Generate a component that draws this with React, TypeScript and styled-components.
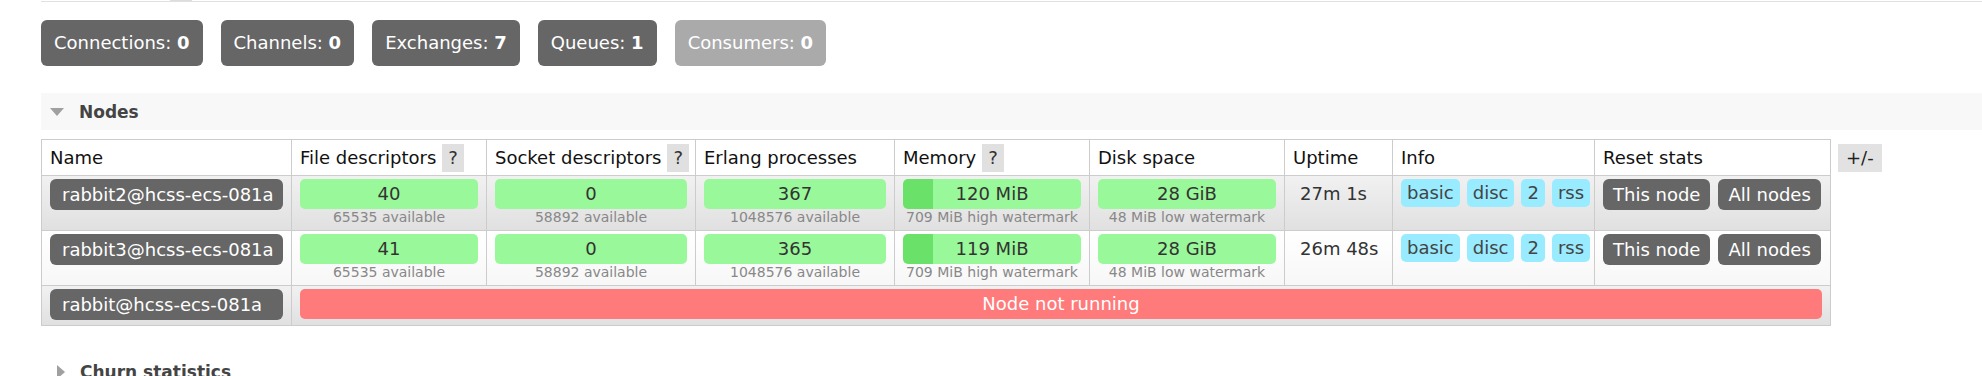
import React from 'react'
import styled, { createGlobalStyle } from 'styled-components'

const GlobalStyle = createGlobalStyle`
  body {
    margin: 0;
    background: #fff;
    font-family: "DejaVu Sans", Verdana, sans-serif;
    color: #333;
  }
`

const Page = styled.div`
  padding-left: 41px;
`

const TopBar = styled.div`
  display: flex;
  height: 1px;
  border-bottom: 1px solid #e0e0e0;
`

const TabStub = styled.div`
  margin-left: 129px;
  width: 22px;
  background: #ddd;
`

const Counters = styled.ul`
  display: flex;
  gap: 18px;
  margin: 18px 0 0;
  padding: 0;
  list-style: none;
`

const Counter = styled.li<{ $muted?: boolean }>`
  height: 46px;
  line-height: 46px;
  padding: 0 13px;
  border-radius: 6px;
  background: ${p => (p.$muted ? '#aaa' : '#666')};
  color: #fff;
  font-size: 18px;
  white-space: nowrap;

  b {
    font-weight: bold;
  }
`

const SectionHeader = styled.div<{ $open?: boolean; $gap: number }>`
  display: flex;
  align-items: center;
  height: 37px;
  margin-top: ${p => p.$gap}px;
  padding-left: 9px;
  background: ${p => (p.$open ? '#f8f8f8' : 'transparent')};
  color: #444;
  font-size: 17px;
  font-weight: bold;
`

const Arrow = styled.span<{ $open?: boolean }>`
  width: 0;
  height: 0;
  margin-right: 15px;
  ${p =>
    p.$open
      ? `
    border-left: 7.5px solid transparent;
    border-right: 7.5px solid transparent;
    border-top: 8px solid #a0a0a0;
  `
      : `
    margin-left: 7px;
    border-top: 7.5px solid transparent;
    border-bottom: 7.5px solid transparent;
    border-left: 8px solid #a0a0a0;
  `}
`

const TableRow = styled.div`
  display: flex;
  align-items: flex-start;
  gap: 7px;
  margin-top: 9px;
`

const Table = styled.table`
  width: 1790px;
  table-layout: fixed;
  border-collapse: collapse;
  border: 1px solid #ccc;
  font-size: 18px;
`

const Th = styled.th<{ $w: number }>`
  width: ${p => p.$w}px;
  box-sizing: border-box;
  padding: 4px 8px 3px;
  border: 1px solid #ccc;
  background: #fff;
  color: #111;
  font-weight: normal;
  text-align: left;
  line-height: 28px;
  white-space: nowrap;
`

const Help = styled.span`
  display: inline-block;
  vertical-align: top;
  margin-left: 6px;
  padding: 0 6px;
  background: #e0e0e0;
  color: #333;
  line-height: 28px;
`

const Tr = styled.tr<{ $alt: boolean }>`
  background: ${p =>
    p.$alt
      ? 'linear-gradient(#f1f1f1, #e0e0e0)'
      : 'linear-gradient(#ffffff, #f7f7f7)'};
`

const Td = styled.td<{ $pl?: number }>`
  border: 1px solid #ccc;
  padding: 3px 8px 5px;
  padding-left: ${p => p.$pl ?? 8}px;
  vertical-align: top;
`

const NodeName = styled.div`
  height: 31px;
  line-height: 31px;
  padding: 0 12px;
  border-radius: 6px;
  background: #666;
  color: #fff;
  white-space: nowrap;
`

const Bar = styled.div<{ $fill?: number }>`
  height: 30px;
  line-height: 30px;
  border-radius: 5px;
  text-align: center;
  color: #333;
  background: ${p =>
    p.$fill !== undefined
      ? `linear-gradient(to right, #6ae26a ${p.$fill}%, #99f899 ${p.$fill}%)`
      : '#99f899'};
`

const DownBar = styled(Bar)`
  background: #ff7a7a;
  color: #fff;
`

const BarNote = styled.div`
  font-size: 14px;
  line-height: 16px;
  color: #888;
  text-align: center;
  white-space: nowrap;
`

const Uptime = styled.div`
  line-height: 30px;
  color: #333;
  white-space: nowrap;
`

const Badges = styled.div`
  display: flex;
  gap: 7px;
`

const Badge = styled.span`
  height: 28px;
  line-height: 28px;
  padding: 0 6px;
  border-radius: 5px;
  background: #99ebff;
  color: #444;
`

const Buttons = styled.div`
  display: flex;
  gap: 8px;
`

const ResetButton = styled.button`
  height: 31px;
  padding: 0 10px;
  border: 0;
  border-radius: 6px;
  background: #666;
  color: #fff;
  font: inherit;
  line-height: 31px;
  white-space: nowrap;
`

const Toggle = styled.div`
  margin-top: 5px;
  height: 28px;
  line-height: 28px;
  padding: 0 8px;
  background: #e2e2e2;
  color: #222;
  font-size: 18px;
`

type Node = {
  name: string
  running: boolean
  fd?: number
  sd?: number
  procs?: number
  mem?: number
  uptime?: string
}

const nodes: Node[] = [
  { name: 'rabbit2@hcss-ecs-081a', running: true, fd: 40, sd: 0, procs: 367, mem: 120, uptime: '27m 1s' },
  { name: 'rabbit3@hcss-ecs-081a', running: true, fd: 41, sd: 0, procs: 365, mem: 119, uptime: '26m 48s' },
  { name: 'rabbit@hcss-ecs-081a', running: false }
]

const columns = [
  { title: 'Name', w: 250 },
  { title: 'File descriptors', w: 195, help: true },
  { title: 'Socket descriptors', w: 209, help: true },
  { title: 'Erlang processes', w: 199 },
  { title: 'Memory', w: 195, help: true },
  { title: 'Disk space', w: 195 },
  { title: 'Uptime', w: 108 },
  { title: 'Info', w: 202 },
  { title: 'Reset stats', w: 236 }
]

const MEM_HIGH = 709

export default function App() {
  return (
    <Page>
      <GlobalStyle />
      <TopBar>
        <TabStub />
      </TopBar>

      <Counters>
        <Counter>Connections: <b>0</b></Counter>
        <Counter>Channels: <b>0</b></Counter>
        <Counter>Exchanges: <b>7</b></Counter>
        <Counter>Queues: <b>1</b></Counter>
        <Counter $muted>Consumers: <b>0</b></Counter>
      </Counters>

      <SectionHeader $open $gap={27}>
        <Arrow $open />
        Nodes
      </SectionHeader>

      <TableRow>
        <Table>
          <thead>
            <tr>
              {columns.map(c => (
                <Th key={c.title} $w={c.w}>
                  {c.title}
                  {c.help && <Help>?</Help>}
                </Th>
              ))}
            </tr>
          </thead>
          <tbody>
            {nodes.map((n, i) => (
              <Tr key={n.name} $alt={i % 2 === 0}>
                <Td>
                  <NodeName>{n.name}</NodeName>
                </Td>
                {n.running ? (
                  <>
                    <Td>
                      <Bar>{n.fd}</Bar>
                      <BarNote>65535 available</BarNote>
                    </Td>
                    <Td>
                      <Bar>{n.sd}</Bar>
                      <BarNote>58892 available</BarNote>
                    </Td>
                    <Td>
                      <Bar>{n.procs}</Bar>
                      <BarNote>1048576 available</BarNote>
                    </Td>
                    <Td>
                      <Bar $fill={((n.mem ?? 0) / MEM_HIGH) * 100}>{n.mem} MiB</Bar>
                      <BarNote>{MEM_HIGH} MiB high watermark</BarNote>
                    </Td>
                    <Td>
                      <Bar>28 GiB</Bar>
                      <BarNote>48 MiB low watermark</BarNote>
                    </Td>
                    <Td $pl={15}>
                      <Uptime>{n.uptime}</Uptime>
                    </Td>
                    <Td>
                      <Badges>
                        <Badge>basic</Badge>
                        <Badge>disc</Badge>
                        <Badge>2</Badge>
                        <Badge>rss</Badge>
                      </Badges>
                    </Td>
                    <Td>
                      <Buttons>
                        <ResetButton>This node</ResetButton>
                        <ResetButton>All nodes</ResetButton>
                      </Buttons>
                    </Td>
                  </>
                ) : (
                  <Td colSpan={8}>
                    <DownBar>Node not running</DownBar>
                  </Td>
                )}
              </Tr>
            ))}
          </tbody>
        </Table>
        <Toggle>+/-</Toggle>
      </TableRow>

      <SectionHeader $gap={27}>
        <Arrow />
        Churn statistics
      </SectionHeader>
    </Page>
  )
}
